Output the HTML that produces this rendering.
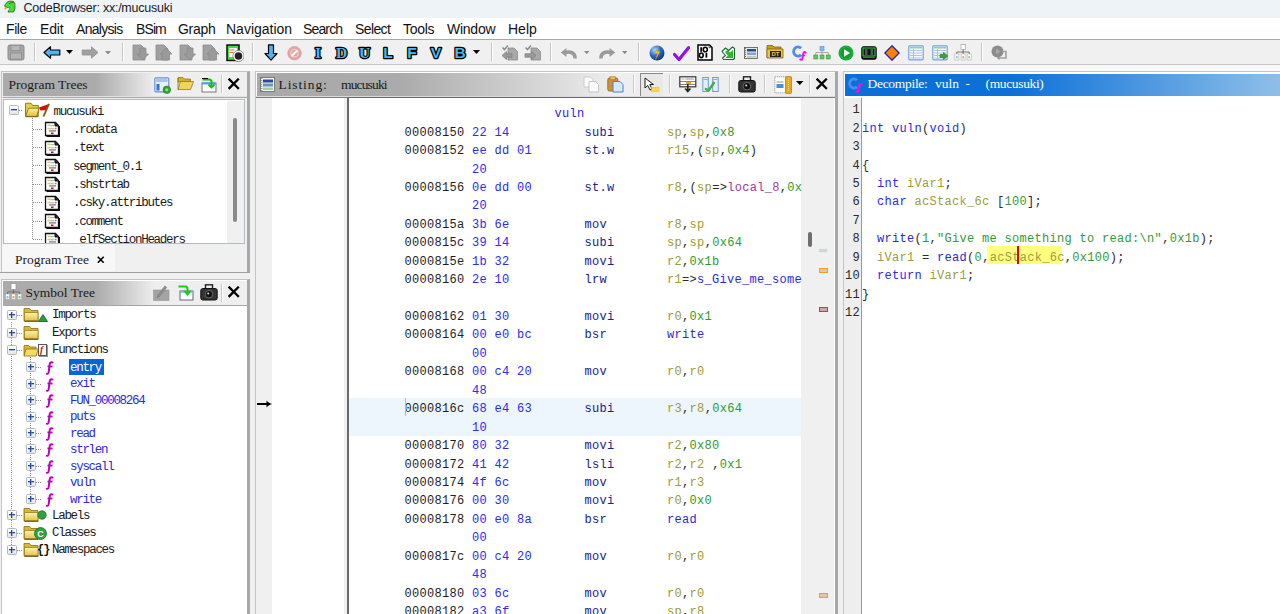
<!DOCTYPE html>
<html><head><meta charset="utf-8">
<style>
*{box-sizing:border-box}
html,body{margin:0;padding:0}
body{width:1280px;height:614px;overflow:hidden;position:relative;background:#f0f0f0;font-family:"Liberation Sans",sans-serif}
.a{position:absolute}
#title{left:0;top:0;width:1280px;height:17.6px;background:#eef3f8}
#title .t{left:23.5px;top:0.8px;font-size:12.5px;color:#1a1a1a;white-space:nowrap;letter-spacing:-0.25px}
#menu{left:0;top:17.6px;width:1280px;height:21.4px;background:#fff}
#menu span{position:absolute;top:3.6px;font-size:14px;color:#111;white-space:nowrap}
#mline{left:0;top:39px;width:1280px;height:1px;background:#a8a8a8}
#tb{left:0;top:40px;width:1280px;height:24px;background:#f0f0f0}
#tbline{left:0;top:64px;width:1280px;height:1px;background:#c8c8c8}
#strip{left:0;top:65px;width:1280px;height:6px;background:#f8f8f8}
.sep{position:absolute;width:1px;background:#c0c0c0}
.mono{font-family:"Liberation Mono",monospace}
.hdr{position:absolute;height:23px}
.htxt{position:absolute;top:5px;font-family:"Liberation Serif",serif;font-size:13.5px;letter-spacing:0px;color:#1a1a1a;white-space:pre}
.row{position:absolute;white-space:pre;font-family:"Liberation Mono",monospace;font-size:12.5px;letter-spacing:-1.3px;color:#111}
.code{position:absolute;white-space:pre;font-family:"Liberation Mono",monospace;font-size:12px;letter-spacing:0.3px;line-height:18.44px}

i{font-style:normal}
.ad{color:#1e1e1e}.by{color:#2a2af2}.mn{color:#20208a}.rg{color:#9c9c32}.cn{color:#2f9a2f}.p{color:#2a2a2a}.lv{color:#a03aa0}.fn{color:#2a2ad0}.lb{color:#2828d8}
.d-p{color:#2a2a2a}.d-k{color:#2a2af0}.d-f{color:#2828d0}.d-v{color:#9c9c40}.d-c{color:#33993a}
.hl{background:#ffff80}
</style></head><body>
<!-- title bar -->
<div id="title" class="a">
  <div class="a t">CodeBrowser: xx:/mucusuki</div>
</div>
<div id="menu" class="a">
  <span style="left:6px;letter-spacing:-0.4px">File</span>
  <span style="left:40px;letter-spacing:-0.2px">Edit</span>
  <span style="left:76px;letter-spacing:-0.7px">Analysis</span>
  <span style="left:136px;letter-spacing:-0.9px">BSim</span>
  <span style="left:178px;letter-spacing:-0.3px">Graph</span>
  <span style="left:226px">Navigation</span>
  <span style="left:303px;letter-spacing:-0.85px">Search</span>
  <span style="left:355px;letter-spacing:-0.6px">Select</span>
  <span style="left:403px;letter-spacing:-0.3px">Tools</span>
  <span style="left:447px;letter-spacing:-0.25px">Window</span>
  <span style="left:508px">Help</span>
</div>
<div id="mline" class="a"></div>
<div id="tb" class="a"></div>
<div id="tbline" class="a"></div>
<div id="strip" class="a"></div>

<!-- LEFT: Program Trees panel -->
<div class="a" style="left:1px;top:71px;width:249px;height:202px;border:1px solid #c4c4c4;border-right:3px solid #a8a8a8;background:#f0f0f0"></div>
<div class="hdr" style="left:3px;top:73px;width:244px;background:linear-gradient(to right,#ababab 0%,#ababab 38%,#eeeeee 62%,#efefef 100%)"></div>
<div class="htxt" style="left:8.5px;top:76.5px">Program Trees</div>
<div class="a" style="left:3px;top:96px;width:244px;height:1px;background:#e4e4e4"></div><div class="a" style="left:3px;top:97px;width:244px;height:1px;background:#a8a8a8"></div>
<div class="a" style="left:3px;top:99px;width:242px;height:145px;border:1px solid #b4bac0;border-top:1.5px solid #b8b8b8;background:#fff"></div><div class="a" style="left:227px;top:100.5px;width:17px;height:142.5px;background:#f0f0f0"></div>
<!-- tab -->
<div class="a" style="left:2px;top:244px;width:113px;height:27px;background:#f7f7f7"></div>
<div class="htxt" style="left:15px;top:251.5px;color:#1a1a1a">Program Tree</div>
<div class="a" style="left:0;top:272px;width:250px;height:1px;background:#a0a0a0"></div>

<!-- LEFT: Symbol Tree panel -->
<div class="a" style="left:1px;top:279px;width:249px;height:336px;border:1px solid #c4c4c4;border-right:3px solid #a8a8a8;border-bottom:none;background:#fff"></div>
<div class="hdr" style="left:3px;top:281px;width:244px;height:24px;background:linear-gradient(to right,#ababab 0%,#ababab 38%,#eeeeee 62%,#efefef 100%)"></div>
<div class="htxt" style="left:25.5px;top:284.5px">Symbol Tree</div>
<div class="a" style="left:3px;top:305px;width:244px;height:1px;background:#a4a4a4"></div>

<!-- MIDDLE: Listing panel -->
<div class="a" style="left:255px;top:71px;width:583px;height:544px;border:1px solid #c4c4c4;border-right:3px solid #a8a8a8;border-bottom:none;background:#fff"></div>
<div class="a" style="left:256px;top:96px;width:579px;height:1px;background:#dcdcdc"></div><div class="a" style="left:256px;top:97px;width:579px;height:1px;background:#7c7c7c"></div>
<div class="hdr" style="left:257px;top:73px;width:578px;height:23px;background:linear-gradient(to right,#a9a9a9 0%,#ababab 25%,#eeeeee 62%,#efefef 100%)"></div>
<div class="htxt" style="left:278.5px;top:76.5px;letter-spacing:0.9px">Listing:</div><div class="htxt" style="left:341px;top:76.5px;letter-spacing:-0.85px">mucusuki</div>
<div class="a" style="left:256px;top:98px;width:16px;height:516px;background:#f0f0f0"></div>
<div class="a" style="left:344px;top:98px;width:3px;height:516px;background:#f0f0f0"></div>
<div class="a" style="left:347px;top:97px;width:2px;height:517px;background:#6a6a6a"></div>
<div class="a" style="left:347px;top:97px;width:454px;height:1px;background:#6a6a6a"></div>
<div class="a" style="left:801px;top:98px;width:33px;height:516px;background:#f0f0f0"></div>

<!-- RIGHT: Decompile panel -->
<div class="a" style="left:843px;top:71px;width:437px;height:544px;border:1px solid #c4c4c4;border-right:none;border-bottom:none;background:#fff"></div>
<div class="hdr" style="left:845px;top:73.5px;width:435px;height:22.7px;background:linear-gradient(to right,#0b6fd8 0%,#0b70d8 38%,#8fbfe8 100%)"></div>
<div class="htxt" style="left:867.5px;top:76px;color:#fff;letter-spacing:-0.3px">Decompile:</div><div class="htxt" style="left:935px;top:76px;color:#fff">vuln</div><div class="htxt" style="left:965.5px;top:76px;color:#fff">-</div><div class="htxt" style="left:985.5px;top:76px;color:#fff;letter-spacing:-0.35px">(mucusuki)</div>
<div class="a" style="left:844px;top:98px;width:17px;height:516px;background:#eeeeee"></div>
<div class="a" style="left:861px;top:98px;width:1px;height:516px;background:#9a9a9a"></div>


<!-- TREES -->
<div class="a" style="left:0;top:0;width:246px;height:243px;overflow:hidden">
<div class="a" style="left:9px;top:105px;width:10px;height:10px;border:1px solid #b0b8c2;border-radius:1.5px;background:linear-gradient(#fff,#e6e6e6)"></div><div class="a" style="left:11px;top:109px;width:6px;height:1px;background:#28458f"></div><div class="a" style="left:11px;top:110px;width:6px;height:1px;background:#6a80b8;opacity:.5"></div>
<div class="a" style="left:19px;top:110px;width:4px;height:1px;background:repeating-linear-gradient(to right,#8a8a8a 0 1px,transparent 1px 2px)"></div>
<svg class="a" style="left:24px;top:102px" width="27" height="16" viewBox="0 0 27 16"><defs><linearGradient id="rf" x1="0" y1="0" x2="0" y2="1"><stop offset="0" stop-color="#fff2a0"/><stop offset="1" stop-color="#e2bc30"/></linearGradient></defs><path d="M1.5 1.2h5.5l1.8 2.3h5.5v10.8H1.5z" fill="#e8cc50" stroke="#8a7010" stroke-width="0.9"/><path d="M4.5 6.2h10.5l-2.2 8.3H1.5z" fill="url(#rf)" stroke="#8a7010" stroke-width="0.9"/><path d="M2 14.8h12" stroke="#5a5030" stroke-width="1" opacity="0.6"/><path d="M15 5.5L24.8 2L22.8 8L16.5 8.5z" fill="#e00808"/><path d="M25 1.8L19.5 14.5" stroke="#7a6010" stroke-width="1.8"/></svg>
<div class="row" style="left:53.5px;top:104.7px;color:#1a1a1a">mucusuki</div>
<div class="a" style="left:32px;top:118px;width:1px;height:122px;background:repeating-linear-gradient(#8a8a8a 0 1px,transparent 1px 2px)"></div>
<div class="a" style="left:33px;top:129px;width:10px;height:1px;background:repeating-linear-gradient(to right,#8a8a8a 0 1px,transparent 1px 2px)"></div>
<svg class="a" style="left:44px;top:121px" width="17" height="16" viewBox="0 0 17 16"><path d="M1.5 1.5h10l3 3v10h-13z" fill="#fff" stroke="#111" stroke-width="1.3"/><path d="M2.5 15.2h12.8V5" fill="none" stroke="#111" stroke-width="1.4"/><path d="M11 1.5v3.5h3.5" fill="#222" stroke="#111"/><rect x="3.5" y="3.5" width="3" height="1.5" fill="#d8d070"/><rect x="6.5" y="4.2" width="4" height="1" fill="#9aa"/><rect x="3.5" y="6.8" width="3" height="1.5" fill="#d8d070"/><rect x="6.5" y="7.3" width="4" height="1" fill="#aaa"/><rect x="11" y="6.8" width="1.5" height="1.5" fill="#d07050"/><rect x="5" y="9.2" width="7" height="1.4" fill="#888"/><rect x="7" y="11.5" width="2.5" height="1.6" fill="#c01010"/></svg>
<div class="row" style="left:73px;top:122.8px;color:#1a1a1a">.rodata</div>
<div class="a" style="left:33px;top:147px;width:10px;height:1px;background:repeating-linear-gradient(to right,#8a8a8a 0 1px,transparent 1px 2px)"></div>
<svg class="a" style="left:44px;top:140px" width="17" height="16" viewBox="0 0 17 16"><path d="M1.5 1.5h10l3 3v10h-13z" fill="#fff" stroke="#111" stroke-width="1.3"/><path d="M2.5 15.2h12.8V5" fill="none" stroke="#111" stroke-width="1.4"/><path d="M11 1.5v3.5h3.5" fill="#222" stroke="#111"/><rect x="3.5" y="3.5" width="3" height="1.5" fill="#d8d070"/><rect x="6.5" y="4.2" width="4" height="1" fill="#9aa"/><rect x="3.5" y="6.8" width="3" height="1.5" fill="#d8d070"/><rect x="6.5" y="7.3" width="4" height="1" fill="#aaa"/><rect x="11" y="6.8" width="1.5" height="1.5" fill="#d07050"/><rect x="5" y="9.2" width="7" height="1.4" fill="#888"/><rect x="7" y="11.5" width="2.5" height="1.6" fill="#c01010"/></svg>
<div class="row" style="left:73px;top:141.2px;color:#1a1a1a">.text</div>
<div class="a" style="left:33px;top:165px;width:10px;height:1px;background:repeating-linear-gradient(to right,#8a8a8a 0 1px,transparent 1px 2px)"></div>
<svg class="a" style="left:44px;top:158px" width="17" height="16" viewBox="0 0 17 16"><path d="M1.5 1.5h10l3 3v10h-13z" fill="#fff" stroke="#111" stroke-width="1.3"/><path d="M2.5 15.2h12.8V5" fill="none" stroke="#111" stroke-width="1.4"/><path d="M11 1.5v3.5h3.5" fill="#222" stroke="#111"/><rect x="3.5" y="3.5" width="3" height="1.5" fill="#d8d070"/><rect x="6.5" y="4.2" width="4" height="1" fill="#9aa"/><rect x="3.5" y="6.8" width="3" height="1.5" fill="#d8d070"/><rect x="6.5" y="7.3" width="4" height="1" fill="#aaa"/><rect x="11" y="6.8" width="1.5" height="1.5" fill="#d07050"/><rect x="5" y="9.2" width="7" height="1.4" fill="#888"/><rect x="7" y="11.5" width="2.5" height="1.6" fill="#c01010"/></svg>
<div class="row" style="left:73px;top:159.59999999999997px;color:#1a1a1a">segment_0.1</div>
<div class="a" style="left:33px;top:184px;width:10px;height:1px;background:repeating-linear-gradient(to right,#8a8a8a 0 1px,transparent 1px 2px)"></div>
<svg class="a" style="left:44px;top:176px" width="17" height="16" viewBox="0 0 17 16"><path d="M1.5 1.5h10l3 3v10h-13z" fill="#fff" stroke="#111" stroke-width="1.3"/><path d="M2.5 15.2h12.8V5" fill="none" stroke="#111" stroke-width="1.4"/><path d="M11 1.5v3.5h3.5" fill="#222" stroke="#111"/><rect x="3.5" y="3.5" width="3" height="1.5" fill="#d8d070"/><rect x="6.5" y="4.2" width="4" height="1" fill="#9aa"/><rect x="3.5" y="6.8" width="3" height="1.5" fill="#d8d070"/><rect x="6.5" y="7.3" width="4" height="1" fill="#aaa"/><rect x="11" y="6.8" width="1.5" height="1.5" fill="#d07050"/><rect x="5" y="9.2" width="7" height="1.4" fill="#888"/><rect x="7" y="11.5" width="2.5" height="1.6" fill="#c01010"/></svg>
<div class="row" style="left:73px;top:177.99999999999997px;color:#1a1a1a">.shstrtab</div>
<div class="a" style="left:33px;top:202px;width:10px;height:1px;background:repeating-linear-gradient(to right,#8a8a8a 0 1px,transparent 1px 2px)"></div>
<svg class="a" style="left:44px;top:195px" width="17" height="16" viewBox="0 0 17 16"><path d="M1.5 1.5h10l3 3v10h-13z" fill="#fff" stroke="#111" stroke-width="1.3"/><path d="M2.5 15.2h12.8V5" fill="none" stroke="#111" stroke-width="1.4"/><path d="M11 1.5v3.5h3.5" fill="#222" stroke="#111"/><rect x="3.5" y="3.5" width="3" height="1.5" fill="#d8d070"/><rect x="6.5" y="4.2" width="4" height="1" fill="#9aa"/><rect x="3.5" y="6.8" width="3" height="1.5" fill="#d8d070"/><rect x="6.5" y="7.3" width="4" height="1" fill="#aaa"/><rect x="11" y="6.8" width="1.5" height="1.5" fill="#d07050"/><rect x="5" y="9.2" width="7" height="1.4" fill="#888"/><rect x="7" y="11.5" width="2.5" height="1.6" fill="#c01010"/></svg>
<div class="row" style="left:73px;top:196.39999999999998px;color:#1a1a1a">.csky.attributes</div>
<div class="a" style="left:33px;top:221px;width:10px;height:1px;background:repeating-linear-gradient(to right,#8a8a8a 0 1px,transparent 1px 2px)"></div>
<svg class="a" style="left:44px;top:213px" width="17" height="16" viewBox="0 0 17 16"><path d="M1.5 1.5h10l3 3v10h-13z" fill="#fff" stroke="#111" stroke-width="1.3"/><path d="M2.5 15.2h12.8V5" fill="none" stroke="#111" stroke-width="1.4"/><path d="M11 1.5v3.5h3.5" fill="#222" stroke="#111"/><rect x="3.5" y="3.5" width="3" height="1.5" fill="#d8d070"/><rect x="6.5" y="4.2" width="4" height="1" fill="#9aa"/><rect x="3.5" y="6.8" width="3" height="1.5" fill="#d8d070"/><rect x="6.5" y="7.3" width="4" height="1" fill="#aaa"/><rect x="11" y="6.8" width="1.5" height="1.5" fill="#d07050"/><rect x="5" y="9.2" width="7" height="1.4" fill="#888"/><rect x="7" y="11.5" width="2.5" height="1.6" fill="#c01010"/></svg>
<div class="row" style="left:73px;top:214.79999999999998px;color:#1a1a1a">.comment</div>
<div class="a" style="left:33px;top:239px;width:10px;height:1px;background:repeating-linear-gradient(to right,#8a8a8a 0 1px,transparent 1px 2px)"></div>
<svg class="a" style="left:44px;top:232px" width="17" height="16" viewBox="0 0 17 16"><path d="M1.5 1.5h10l3 3v10h-13z" fill="#fff" stroke="#111" stroke-width="1.3"/><path d="M2.5 15.2h12.8V5" fill="none" stroke="#111" stroke-width="1.4"/><path d="M11 1.5v3.5h3.5" fill="#222" stroke="#111"/><rect x="3.5" y="3.5" width="3" height="1.5" fill="#d8d070"/><rect x="6.5" y="4.2" width="4" height="1" fill="#9aa"/><rect x="3.5" y="6.8" width="3" height="1.5" fill="#d8d070"/><rect x="6.5" y="7.3" width="4" height="1" fill="#aaa"/><rect x="11" y="6.8" width="1.5" height="1.5" fill="#d07050"/><rect x="5" y="9.2" width="7" height="1.4" fill="#888"/><rect x="7" y="11.5" width="2.5" height="1.6" fill="#c01010"/></svg>
<div class="row" style="left:73px;top:233.2px;color:#1a1a1a">_elfSectionHeaders</div>
<div class="a" style="left:233px;top:118px;width:4px;height:104px;background:#8a8a8a;border-radius:2px"></div>
</div>
<div class="a" style="left:11px;top:322px;width:1px;height:232px;background:repeating-linear-gradient(#8a8a8a 0 1px,transparent 1px 2px)"></div>
<div class="a" style="left:7px;top:310px;width:10px;height:10px;border:1px solid #b0b8c2;border-radius:1.5px;background:linear-gradient(#fff,#e6e6e6)"></div><div class="a" style="left:9px;top:314px;width:6px;height:1px;background:#28458f"></div><div class="a" style="left:9px;top:315px;width:6px;height:1px;background:#6a80b8;opacity:.5"></div><div class="a" style="left:11px;top:312px;width:1px;height:6px;background:#28458f"></div><div class="a" style="left:12px;top:312px;width:1px;height:6px;background:#6a80b8;opacity:.5"></div>
<div class="a" style="left:17px;top:315px;width:5px;height:1px;background:repeating-linear-gradient(to right,#8a8a8a 0 1px,transparent 1px 2px)"></div>
<svg class="a" style="left:23px;top:307px" width="17" height="15" viewBox="0 0 17 15"><defs><linearGradient id="fg" x1="0" y1="0" x2="0" y2="1"><stop offset="0" stop-color="#fff4b0"/><stop offset="1" stop-color="#e0c048"/></linearGradient></defs><path d="M1 1.5h5.5l1.5 2h7v10.5H1z" fill="#d8b838" stroke="#8a7010" stroke-width="0.8"/><path d="M1.5 5.5h13.5v8.5H1.5z" fill="url(#fg)" stroke="#9a8018" stroke-width="0.8"/><path d="M1.5 14.2h13.8" stroke="#6a5a10" stroke-width="1.2"/></svg>
<div class="row" style="left:52px;top:308.09999999999997px;color:#1a1a1a">Imports</div>
<div class="a" style="left:7px;top:328px;width:10px;height:10px;border:1px solid #b0b8c2;border-radius:1.5px;background:linear-gradient(#fff,#e6e6e6)"></div><div class="a" style="left:9px;top:332px;width:6px;height:1px;background:#28458f"></div><div class="a" style="left:9px;top:333px;width:6px;height:1px;background:#6a80b8;opacity:.5"></div><div class="a" style="left:11px;top:330px;width:1px;height:6px;background:#28458f"></div><div class="a" style="left:12px;top:330px;width:1px;height:6px;background:#6a80b8;opacity:.5"></div>
<div class="a" style="left:17px;top:333px;width:5px;height:1px;background:repeating-linear-gradient(to right,#8a8a8a 0 1px,transparent 1px 2px)"></div>
<svg class="a" style="left:23px;top:325px" width="17" height="15" viewBox="0 0 17 15"><defs><linearGradient id="fg" x1="0" y1="0" x2="0" y2="1"><stop offset="0" stop-color="#fff4b0"/><stop offset="1" stop-color="#e0c048"/></linearGradient></defs><path d="M1 1.5h5.5l1.5 2h7v10.5H1z" fill="#d8b838" stroke="#8a7010" stroke-width="0.8"/><path d="M1.5 5.5h13.5v8.5H1.5z" fill="url(#fg)" stroke="#9a8018" stroke-width="0.8"/><path d="M1.5 14.2h13.8" stroke="#6a5a10" stroke-width="1.2"/></svg>
<div class="row" style="left:52px;top:325.7px;color:#1a1a1a">Exports</div>
<div class="a" style="left:7px;top:345px;width:10px;height:10px;border:1px solid #b0b8c2;border-radius:1.5px;background:linear-gradient(#fff,#e6e6e6)"></div><div class="a" style="left:9px;top:349px;width:6px;height:1px;background:#28458f"></div><div class="a" style="left:9px;top:350px;width:6px;height:1px;background:#6a80b8;opacity:.5"></div>
<div class="a" style="left:17px;top:350px;width:5px;height:1px;background:repeating-linear-gradient(to right,#8a8a8a 0 1px,transparent 1px 2px)"></div>
<svg class="a" style="left:23px;top:343px" width="16" height="14" viewBox="0 0 16 14"><path d="M1 2.5h4.5l1.5 1.5h6v8.5H1z" fill="#d9b838" stroke="#8a7010" stroke-width="0.8"/><path d="M3 6h12.5l-2.5 7H1z" fill="#f4dc60" stroke="#8a7010" stroke-width="0.8"/></svg>
<div class="row" style="left:52px;top:343.0px;color:#1a1a1a">Functions</div>
<div class="a" style="left:7px;top:510px;width:10px;height:10px;border:1px solid #b0b8c2;border-radius:1.5px;background:linear-gradient(#fff,#e6e6e6)"></div><div class="a" style="left:9px;top:514px;width:6px;height:1px;background:#28458f"></div><div class="a" style="left:9px;top:515px;width:6px;height:1px;background:#6a80b8;opacity:.5"></div><div class="a" style="left:11px;top:512px;width:1px;height:6px;background:#28458f"></div><div class="a" style="left:12px;top:512px;width:1px;height:6px;background:#6a80b8;opacity:.5"></div>
<div class="a" style="left:17px;top:515px;width:5px;height:1px;background:repeating-linear-gradient(to right,#8a8a8a 0 1px,transparent 1px 2px)"></div>
<svg class="a" style="left:23px;top:507px" width="17" height="15" viewBox="0 0 17 15"><defs><linearGradient id="fg" x1="0" y1="0" x2="0" y2="1"><stop offset="0" stop-color="#fff4b0"/><stop offset="1" stop-color="#e0c048"/></linearGradient></defs><path d="M1 1.5h5.5l1.5 2h7v10.5H1z" fill="#d8b838" stroke="#8a7010" stroke-width="0.8"/><path d="M1.5 5.5h13.5v8.5H1.5z" fill="url(#fg)" stroke="#9a8018" stroke-width="0.8"/><path d="M1.5 14.2h13.8" stroke="#6a5a10" stroke-width="1.2"/></svg>
<div class="row" style="left:52px;top:508.59999999999997px;color:#1a1a1a">Labels</div>
<div class="a" style="left:7px;top:528px;width:10px;height:10px;border:1px solid #b0b8c2;border-radius:1.5px;background:linear-gradient(#fff,#e6e6e6)"></div><div class="a" style="left:9px;top:532px;width:6px;height:1px;background:#28458f"></div><div class="a" style="left:9px;top:533px;width:6px;height:1px;background:#6a80b8;opacity:.5"></div><div class="a" style="left:11px;top:530px;width:1px;height:6px;background:#28458f"></div><div class="a" style="left:12px;top:530px;width:1px;height:6px;background:#6a80b8;opacity:.5"></div>
<div class="a" style="left:17px;top:533px;width:5px;height:1px;background:repeating-linear-gradient(to right,#8a8a8a 0 1px,transparent 1px 2px)"></div>
<svg class="a" style="left:23px;top:525px" width="17" height="15" viewBox="0 0 17 15"><defs><linearGradient id="fg" x1="0" y1="0" x2="0" y2="1"><stop offset="0" stop-color="#fff4b0"/><stop offset="1" stop-color="#e0c048"/></linearGradient></defs><path d="M1 1.5h5.5l1.5 2h7v10.5H1z" fill="#d8b838" stroke="#8a7010" stroke-width="0.8"/><path d="M1.5 5.5h13.5v8.5H1.5z" fill="url(#fg)" stroke="#9a8018" stroke-width="0.8"/><path d="M1.5 14.2h13.8" stroke="#6a5a10" stroke-width="1.2"/></svg>
<div class="row" style="left:52px;top:526.0px;color:#1a1a1a">Classes</div>
<div class="a" style="left:7px;top:545px;width:10px;height:10px;border:1px solid #b0b8c2;border-radius:1.5px;background:linear-gradient(#fff,#e6e6e6)"></div><div class="a" style="left:9px;top:549px;width:6px;height:1px;background:#28458f"></div><div class="a" style="left:9px;top:550px;width:6px;height:1px;background:#6a80b8;opacity:.5"></div><div class="a" style="left:11px;top:547px;width:1px;height:6px;background:#28458f"></div><div class="a" style="left:12px;top:547px;width:1px;height:6px;background:#6a80b8;opacity:.5"></div>
<div class="a" style="left:17px;top:550px;width:5px;height:1px;background:repeating-linear-gradient(to right,#8a8a8a 0 1px,transparent 1px 2px)"></div>
<svg class="a" style="left:23px;top:542px" width="17" height="15" viewBox="0 0 17 15"><defs><linearGradient id="fg" x1="0" y1="0" x2="0" y2="1"><stop offset="0" stop-color="#fff4b0"/><stop offset="1" stop-color="#e0c048"/></linearGradient></defs><path d="M1 1.5h5.5l1.5 2h7v10.5H1z" fill="#d8b838" stroke="#8a7010" stroke-width="0.8"/><path d="M1.5 5.5h13.5v8.5H1.5z" fill="url(#fg)" stroke="#9a8018" stroke-width="0.8"/><path d="M1.5 14.2h13.8" stroke="#6a5a10" stroke-width="1.2"/></svg>
<div class="row" style="left:52px;top:543.4000000000001px;color:#1a1a1a">Namespaces</div>
<svg class="a" style="left:38px;top:314px" width="10" height="8" viewBox="0 0 10 8"><path d="M5 0.5L9.5 7.5H0.5z" fill="#22a040" stroke="#106020" stroke-width="0.8"/></svg>
<div class="a" style="left:38px;top:344px;width:9px;height:12px;background:#fff;border:1px solid #555;box-shadow:1px 1px 0 #999"></div><div class="a" style="left:40px;top:344px;font:italic bold 10px 'Liberation Serif';color:#e01010">f</div>
<svg class="a" style="left:37px;top:510px" width="10" height="10" viewBox="0 0 10 10"><circle cx="5" cy="5" r="4.2" fill="#30a040" stroke="#207030" stroke-width="0.8"/></svg>
<svg class="a" style="left:34px;top:527px" width="13" height="13" viewBox="0 0 13 13"><circle cx="6.5" cy="6.5" r="6" fill="#30a040" stroke="#207030" stroke-width="0.8"/><text x="6.5" y="10" font-family="Liberation Sans" font-size="9" font-weight="bold" fill="#fff" text-anchor="middle">C</text></svg>
<div class="a" style="left:37px;top:543px;font:bold 12px 'Liberation Mono';color:#111;letter-spacing:-1px">{}</div>
<div class="a" style="left:30px;top:357px;width:1px;height:146px;background:repeating-linear-gradient(#8a8a8a 0 1px,transparent 1px 2px)"></div>
<div class="a" style="left:26px;top:362px;width:10px;height:10px;border:1px solid #b0b8c2;border-radius:1.5px;background:linear-gradient(#fff,#e6e6e6)"></div><div class="a" style="left:28px;top:366px;width:6px;height:1px;background:#28458f"></div><div class="a" style="left:28px;top:367px;width:6px;height:1px;background:#6a80b8;opacity:.5"></div><div class="a" style="left:30px;top:364px;width:1px;height:6px;background:#28458f"></div><div class="a" style="left:31px;top:364px;width:1px;height:6px;background:#6a80b8;opacity:.5"></div>
<div class="a" style="left:36px;top:367px;width:5px;height:1px;background:repeating-linear-gradient(to right,#8a8a8a 0 1px,transparent 1px 2px)"></div>
<svg class="a" style="left:46px;top:361px" width="8" height="14" viewBox="0 0 8 14"><path d="M6.8 2.2C6 0.8 4.2 1 3.8 2.8L2.6 11.5C2.2 13 0.8 13 0.6 12" fill="none" stroke="#c000c0" stroke-width="2"/><path d="M1.5 5.5h5" stroke="#c000c0" stroke-width="1.8"/></svg>
<div class="a" style="left:69px;top:358.5px;width:35px;height:16px;background:#0a64d4"></div>
<div class="row" style="left:70px;top:360.9px;color:#fff">entry</div>
<div class="a" style="left:26px;top:379px;width:10px;height:10px;border:1px solid #b0b8c2;border-radius:1.5px;background:linear-gradient(#fff,#e6e6e6)"></div><div class="a" style="left:28px;top:383px;width:6px;height:1px;background:#28458f"></div><div class="a" style="left:28px;top:384px;width:6px;height:1px;background:#6a80b8;opacity:.5"></div><div class="a" style="left:30px;top:381px;width:1px;height:6px;background:#28458f"></div><div class="a" style="left:31px;top:381px;width:1px;height:6px;background:#6a80b8;opacity:.5"></div>
<div class="a" style="left:36px;top:384px;width:5px;height:1px;background:repeating-linear-gradient(to right,#8a8a8a 0 1px,transparent 1px 2px)"></div>
<svg class="a" style="left:46px;top:378px" width="8" height="14" viewBox="0 0 8 14"><path d="M6.8 2.2C6 0.8 4.2 1 3.8 2.8L2.6 11.5C2.2 13 0.8 13 0.6 12" fill="none" stroke="#c000c0" stroke-width="2"/><path d="M1.5 5.5h5" stroke="#c000c0" stroke-width="1.8"/></svg>
<div class="row" style="left:70px;top:377.35999999999996px;color:#2a2ae0">exit</div>
<div class="a" style="left:26px;top:395px;width:10px;height:10px;border:1px solid #b0b8c2;border-radius:1.5px;background:linear-gradient(#fff,#e6e6e6)"></div><div class="a" style="left:28px;top:399px;width:6px;height:1px;background:#28458f"></div><div class="a" style="left:28px;top:400px;width:6px;height:1px;background:#6a80b8;opacity:.5"></div><div class="a" style="left:30px;top:397px;width:1px;height:6px;background:#28458f"></div><div class="a" style="left:31px;top:397px;width:1px;height:6px;background:#6a80b8;opacity:.5"></div>
<div class="a" style="left:36px;top:400px;width:5px;height:1px;background:repeating-linear-gradient(to right,#8a8a8a 0 1px,transparent 1px 2px)"></div>
<svg class="a" style="left:46px;top:394px" width="8" height="14" viewBox="0 0 8 14"><path d="M6.8 2.2C6 0.8 4.2 1 3.8 2.8L2.6 11.5C2.2 13 0.8 13 0.6 12" fill="none" stroke="#c000c0" stroke-width="2"/><path d="M1.5 5.5h5" stroke="#c000c0" stroke-width="1.8"/></svg>
<div class="row" style="left:70px;top:393.82px;color:#2a2ae0">FUN_00008264</div>
<div class="a" style="left:26px;top:412px;width:10px;height:10px;border:1px solid #b0b8c2;border-radius:1.5px;background:linear-gradient(#fff,#e6e6e6)"></div><div class="a" style="left:28px;top:416px;width:6px;height:1px;background:#28458f"></div><div class="a" style="left:28px;top:417px;width:6px;height:1px;background:#6a80b8;opacity:.5"></div><div class="a" style="left:30px;top:414px;width:1px;height:6px;background:#28458f"></div><div class="a" style="left:31px;top:414px;width:1px;height:6px;background:#6a80b8;opacity:.5"></div>
<div class="a" style="left:36px;top:417px;width:5px;height:1px;background:repeating-linear-gradient(to right,#8a8a8a 0 1px,transparent 1px 2px)"></div>
<svg class="a" style="left:46px;top:411px" width="8" height="14" viewBox="0 0 8 14"><path d="M6.8 2.2C6 0.8 4.2 1 3.8 2.8L2.6 11.5C2.2 13 0.8 13 0.6 12" fill="none" stroke="#c000c0" stroke-width="2"/><path d="M1.5 5.5h5" stroke="#c000c0" stroke-width="1.8"/></svg>
<div class="row" style="left:70px;top:410.28px;color:#2a2ae0">puts</div>
<div class="a" style="left:26px;top:428px;width:10px;height:10px;border:1px solid #b0b8c2;border-radius:1.5px;background:linear-gradient(#fff,#e6e6e6)"></div><div class="a" style="left:28px;top:432px;width:6px;height:1px;background:#28458f"></div><div class="a" style="left:28px;top:433px;width:6px;height:1px;background:#6a80b8;opacity:.5"></div><div class="a" style="left:30px;top:430px;width:1px;height:6px;background:#28458f"></div><div class="a" style="left:31px;top:430px;width:1px;height:6px;background:#6a80b8;opacity:.5"></div>
<div class="a" style="left:36px;top:433px;width:5px;height:1px;background:repeating-linear-gradient(to right,#8a8a8a 0 1px,transparent 1px 2px)"></div>
<svg class="a" style="left:46px;top:427px" width="8" height="14" viewBox="0 0 8 14"><path d="M6.8 2.2C6 0.8 4.2 1 3.8 2.8L2.6 11.5C2.2 13 0.8 13 0.6 12" fill="none" stroke="#c000c0" stroke-width="2"/><path d="M1.5 5.5h5" stroke="#c000c0" stroke-width="1.8"/></svg>
<div class="row" style="left:70px;top:426.73999999999995px;color:#2a2ae0">read</div>
<div class="a" style="left:26px;top:444px;width:10px;height:10px;border:1px solid #b0b8c2;border-radius:1.5px;background:linear-gradient(#fff,#e6e6e6)"></div><div class="a" style="left:28px;top:448px;width:6px;height:1px;background:#28458f"></div><div class="a" style="left:28px;top:449px;width:6px;height:1px;background:#6a80b8;opacity:.5"></div><div class="a" style="left:30px;top:446px;width:1px;height:6px;background:#28458f"></div><div class="a" style="left:31px;top:446px;width:1px;height:6px;background:#6a80b8;opacity:.5"></div>
<div class="a" style="left:36px;top:449px;width:5px;height:1px;background:repeating-linear-gradient(to right,#8a8a8a 0 1px,transparent 1px 2px)"></div>
<svg class="a" style="left:46px;top:443px" width="8" height="14" viewBox="0 0 8 14"><path d="M6.8 2.2C6 0.8 4.2 1 3.8 2.8L2.6 11.5C2.2 13 0.8 13 0.6 12" fill="none" stroke="#c000c0" stroke-width="2"/><path d="M1.5 5.5h5" stroke="#c000c0" stroke-width="1.8"/></svg>
<div class="row" style="left:70px;top:443.2px;color:#2a2ae0">strlen</div>
<div class="a" style="left:26px;top:461px;width:10px;height:10px;border:1px solid #b0b8c2;border-radius:1.5px;background:linear-gradient(#fff,#e6e6e6)"></div><div class="a" style="left:28px;top:465px;width:6px;height:1px;background:#28458f"></div><div class="a" style="left:28px;top:466px;width:6px;height:1px;background:#6a80b8;opacity:.5"></div><div class="a" style="left:30px;top:463px;width:1px;height:6px;background:#28458f"></div><div class="a" style="left:31px;top:463px;width:1px;height:6px;background:#6a80b8;opacity:.5"></div>
<div class="a" style="left:36px;top:466px;width:5px;height:1px;background:repeating-linear-gradient(to right,#8a8a8a 0 1px,transparent 1px 2px)"></div>
<svg class="a" style="left:46px;top:460px" width="8" height="14" viewBox="0 0 8 14"><path d="M6.8 2.2C6 0.8 4.2 1 3.8 2.8L2.6 11.5C2.2 13 0.8 13 0.6 12" fill="none" stroke="#c000c0" stroke-width="2"/><path d="M1.5 5.5h5" stroke="#c000c0" stroke-width="1.8"/></svg>
<div class="row" style="left:70px;top:459.65999999999997px;color:#2a2ae0">syscall</div>
<div class="a" style="left:26px;top:477px;width:10px;height:10px;border:1px solid #b0b8c2;border-radius:1.5px;background:linear-gradient(#fff,#e6e6e6)"></div><div class="a" style="left:28px;top:481px;width:6px;height:1px;background:#28458f"></div><div class="a" style="left:28px;top:482px;width:6px;height:1px;background:#6a80b8;opacity:.5"></div><div class="a" style="left:30px;top:479px;width:1px;height:6px;background:#28458f"></div><div class="a" style="left:31px;top:479px;width:1px;height:6px;background:#6a80b8;opacity:.5"></div>
<div class="a" style="left:36px;top:482px;width:5px;height:1px;background:repeating-linear-gradient(to right,#8a8a8a 0 1px,transparent 1px 2px)"></div>
<svg class="a" style="left:46px;top:476px" width="8" height="14" viewBox="0 0 8 14"><path d="M6.8 2.2C6 0.8 4.2 1 3.8 2.8L2.6 11.5C2.2 13 0.8 13 0.6 12" fill="none" stroke="#c000c0" stroke-width="2"/><path d="M1.5 5.5h5" stroke="#c000c0" stroke-width="1.8"/></svg>
<div class="row" style="left:70px;top:476.11999999999995px;color:#2a2ae0">vuln</div>
<div class="a" style="left:26px;top:494px;width:10px;height:10px;border:1px solid #b0b8c2;border-radius:1.5px;background:linear-gradient(#fff,#e6e6e6)"></div><div class="a" style="left:28px;top:498px;width:6px;height:1px;background:#28458f"></div><div class="a" style="left:28px;top:499px;width:6px;height:1px;background:#6a80b8;opacity:.5"></div><div class="a" style="left:30px;top:496px;width:1px;height:6px;background:#28458f"></div><div class="a" style="left:31px;top:496px;width:1px;height:6px;background:#6a80b8;opacity:.5"></div>
<div class="a" style="left:36px;top:499px;width:5px;height:1px;background:repeating-linear-gradient(to right,#8a8a8a 0 1px,transparent 1px 2px)"></div>
<svg class="a" style="left:46px;top:493px" width="8" height="14" viewBox="0 0 8 14"><path d="M6.8 2.2C6 0.8 4.2 1 3.8 2.8L2.6 11.5C2.2 13 0.8 13 0.6 12" fill="none" stroke="#c000c0" stroke-width="2"/><path d="M1.5 5.5h5" stroke="#c000c0" stroke-width="1.8"/></svg>
<div class="row" style="left:70px;top:492.58px;color:#2a2ae0">write</div>
<svg class="a" style="left:97px;top:255.5px" width="7.5" height="7.5" viewBox="0 0 7.5 7.5"><path d="M0.8 0.8L6.7 6.7M6.7 0.8L0.8 6.7" stroke="#000" stroke-width="1.6"/></svg>
<svg class="a" style="left:256px;top:399.5px" width="17" height="8" viewBox="0 0 17 8"><path d="M1 4H12" stroke="#000" stroke-width="2"/><path d="M10.5 0.5C12 2.5 14 3.5 16.2 4C14 4.5 12 5.5 10.5 7.5z" fill="#000"/></svg>
<div class="a" style="left:807.5px;top:231.5px;width:4px;height:15.5px;background:#6e6e6e;border-radius:2px"></div>
<div class="a" style="left:818.5px;top:248.5px;width:8.5px;height:3.5px;background:#d4d4d4;box-shadow:0 0 0 1px #e8eef4"></div>
<div class="a" style="left:818.5px;top:267.5px;width:9px;height:5px;background:#e0c8a0;border:1px solid #f0a020"></div>
<div class="a" style="left:818.5px;top:307px;width:9px;height:5px;background:#d8a0a8;border:1px solid #d83050"></div>
<div class="a" style="left:818.5px;top:593px;width:9px;height:5px;background:#e0c8a0;border:1px solid #f0a020"></div>
<!-- /TREES -->
<!-- listing content -->
<div class="a" style="left:349px;top:397.5px;width:452px;height:38px;background:#edf5fd"></div>
<div class="code" style="left:404.5px;top:105.2px">                    <i class="lb">vuln</i>
<i class="ad">00008150</i> <i class="by">22 14          </i><i class="mn">subi       </i><i class="rg">sp</i><i class="p">,</i><i class="rg">sp</i><i class="p">,</i><i class="cn">0x8</i>
<i class="ad">00008152</i> <i class="by">ee dd 01       </i><i class="mn">st.w       </i><i class="rg">r15</i><i class="p">,(</i><i class="rg">sp</i><i class="p">,</i><i class="cn">0x4</i><i class="p">)</i>
         <i class="by">20</i>
<i class="ad">00008156</i> <i class="by">0e dd 00       </i><i class="mn">st.w       </i><i class="rg">r8</i><i class="p">,(</i><i class="rg">sp</i><i class="p">=></i><i class="lv">local_8</i><i class="p">,</i><i class="cn">0x</i>
         <i class="by">20</i>
<i class="ad">0000815a</i> <i class="by">3b 6e          </i><i class="mn">mov        </i><i class="rg">r8</i><i class="p">,</i><i class="rg">sp</i>
<i class="ad">0000815c</i> <i class="by">39 14          </i><i class="mn">subi       </i><i class="rg">sp</i><i class="p">,</i><i class="rg">sp</i><i class="p">,</i><i class="cn">0x64</i>
<i class="ad">0000815e</i> <i class="by">1b 32          </i><i class="mn">movi       </i><i class="rg">r2</i><i class="p">,</i><i class="cn">0x1b</i>
<i class="ad">00008160</i> <i class="by">2e 10          </i><i class="mn">lrw        </i><i class="rg">r1</i><i class="p">=></i><i class="fn">s_Give_me_some</i>

<i class="ad">00008162</i> <i class="by">01 30          </i><i class="mn">movi       </i><i class="rg">r0</i><i class="p">,</i><i class="cn">0x1</i>
<i class="ad">00008164</i> <i class="by">00 e0 bc       </i><i class="mn">bsr        </i><i class="fn">write</i>
         <i class="by">00</i>
<i class="ad">00008168</i> <i class="by">00 c4 20       </i><i class="mn">mov        </i><i class="rg">r0</i><i class="p">,</i><i class="rg">r0</i>
         <i class="by">48</i>
<i class="ad">0000816c</i> <i class="by">68 e4 63       </i><i class="mn">subi       </i><i class="rg">r3</i><i class="p">,</i><i class="rg">r8</i><i class="p">,</i><i class="cn">0x64</i>
         <i class="by">10</i>
<i class="ad">00008170</i> <i class="by">80 32          </i><i class="mn">movi       </i><i class="rg">r2</i><i class="p">,</i><i class="cn">0x80</i>
<i class="ad">00008172</i> <i class="by">41 42          </i><i class="mn">lsli       </i><i class="rg">r2</i><i class="p">,</i><i class="rg">r2</i><i class="p"> ,</i><i class="cn">0x1</i>
<i class="ad">00008174</i> <i class="by">4f 6c          </i><i class="mn">mov        </i><i class="rg">r1</i><i class="p">,</i><i class="rg">r3</i>
<i class="ad">00008176</i> <i class="by">00 30          </i><i class="mn">movi       </i><i class="rg">r0</i><i class="p">,</i><i class="cn">0x0</i>
<i class="ad">00008178</i> <i class="by">00 e0 8a       </i><i class="mn">bsr        </i><i class="fn">read</i>
         <i class="by">00</i>
<i class="ad">0000817c</i> <i class="by">00 c4 20       </i><i class="mn">mov        </i><i class="rg">r0</i><i class="p">,</i><i class="rg">r0</i>
         <i class="by">48</i>
<i class="ad">00008180</i> <i class="by">03 6c          </i><i class="mn">mov        </i><i class="rg">r0</i><i class="p">,</i><i class="rg">r0</i>
<i class="ad">00008182</i> <i class="by">a3 6f          </i><i class="mn">mov        </i><i class="rg">sp</i><i class="p">,</i><i class="rg">r8</i></div>
<div class="a" style="left:404.5px;top:398px;width:1.8px;height:17.5px;background:#f2a0a8"></div>
<!-- decompile content -->
<div class="code" style="left:845px;top:101.2px;width:15px;text-align:right;color:#2a2a2a">1
2
3
4
5
6
7
8
9
10
11
12</div>
<div class="a" style="left:987px;top:246px;width:75px;height:18px;background:#ffff80"></div>
<div class="code" style="left:862px;top:101.2px"><i class="d-p"></i>
<i class="d-k">int</i> <i class="d-f">vuln</i><i class="d-p">(</i><i class="d-k">void</i><i class="d-p">)</i>

<i class="d-p">{</i>
  <i class="d-k">int</i> <i class="d-v">iVar1</i><i class="d-p">;</i>
  <i class="d-k">char</i> <i class="d-v">acStack_6c</i> <i class="d-p">[</i><i class="d-c">100</i><i class="d-p">];</i>

  <i class="d-f">write</i><i class="d-p">(</i><i class="d-c">1</i><i class="d-p">,</i><i class="d-c">"Give me something to read:\n"</i><i class="d-p">,</i><i class="d-c">0x1b</i><i class="d-p">);</i>
  <i class="d-v">iVar1</i> <i class="d-p">=</i> <i class="d-f">read</i><i class="d-p">(</i><i class="d-c">0</i><i class="d-p">,</i><i class="d-v">acStack_6c</i><i class="d-p">,</i><i class="d-c">0x100</i><i class="d-p">);</i>
  <i class="d-k">return</i> <i class="d-v">iVar1</i><i class="d-p">;</i>
<i class="d-p">}</i>
</div>
<div class="a" style="left:1017px;top:246px;width:2px;height:18px;background:#e00000"></div>
<!-- ICONS -->
<svg class="a" style="left:7px;top:44px" width="18" height="17" viewBox="0 0 18 17"><rect x="1" y="1" width="16" height="15" rx="2" fill="#a4a4a4" stroke="#8c8c8c"/><rect x="4" y="1.5" width="9" height="5" fill="#b8b8b8" stroke="#909090" stroke-width="0.8"/><rect x="3.5" y="9" width="11" height="6" fill="#b4b4b4" stroke="#909090" stroke-width="0.8"/></svg>
<div class="a" style="left:33.5px;top:43px;width:1px;height:18px;background:#c4c4c4;box-shadow:1px 0 0 #fff"></div>
<svg class="a" style="left:43px;top:46px" width="18" height="13" viewBox="0 0 18 13"><path d="M1 6.5L7.5 0.8V4H16.8V9H7.5V12.2z" fill="#4cb4f0" stroke="#000" stroke-width="1.2" stroke-linejoin="round"/></svg>
<svg class="a" style="left:65.5px;top:49.5px" width="7" height="4" viewBox="0 0 7 4"><path d="M0 0H7L3.5 4z" fill="#000"/></svg>
<svg class="a" style="left:81px;top:46px" width="18" height="13" viewBox="0 0 18 13"><path d="M17 6.5L10.5 0.8V4H1.2V9H10.5V12.2z" fill="#a0a0a0" stroke="#909090" stroke-width="0.8"/></svg>
<svg class="a" style="left:105px;top:50.5px" width="6" height="3.5" viewBox="0 0 6 3.5"><path d="M0 0H6L3 3.5z" fill="#8c8c8c"/></svg>
<div class="a" style="left:121.5px;top:43px;width:1px;height:18px;background:#c4c4c4;box-shadow:1px 0 0 #fff"></div>
<svg class="a" style="left:131.5px;top:44px" width="18" height="17" viewBox="0 0 18 17"><path d="M1 1h8l4 4v11H1z" fill="#a0a0a0" stroke="#8a8a8a" stroke-width="0.8"/><path d="M8 4h6v6h2.5L11 16 5 10h3z" fill="#9a9a9a" stroke="#8a8a8a" stroke-width="0.8"/></svg>
<svg class="a" style="left:155px;top:44px" width="18" height="17" viewBox="0 0 18 17"><path d="M1 1h8l4 4v11H1z" fill="#a0a0a0" stroke="#8a8a8a" stroke-width="0.8"/><path d="M7 16V10H5L11 4l6 6h-2.5v6z" fill="#9a9a9a" stroke="#8a8a8a" stroke-width="0.8"/></svg>
<svg class="a" style="left:178.5px;top:44px" width="18" height="17" viewBox="0 0 18 17"><path d="M1 1h8l4 4v11H1z" fill="#a0a0a0" stroke="#8a8a8a" stroke-width="0.8"/><path d="M8 4h6v6h2.5L11 16 5 10h3z" fill="#9a9a9a" stroke="#8a8a8a" stroke-width="0.8"/></svg>
<svg class="a" style="left:202px;top:44px" width="18" height="17" viewBox="0 0 18 17"><path d="M1 1h8l4 4v11H1z" fill="#a0a0a0" stroke="#8a8a8a" stroke-width="0.8"/><path d="M7 16V10H5L11 4l6 6h-2.5v6z" fill="#9a9a9a" stroke="#8a8a8a" stroke-width="0.8"/></svg>
<svg class="a" style="left:225.5px;top:44px" width="18" height="18" viewBox="0 0 18 18"><rect x="1" y="1" width="12" height="15.5" fill="#40e040" stroke="#000" stroke-width="1.4"/><rect x="3" y="4" width="8" height="9" fill="#fff"/><path d="M3.5 6h5M3.5 8.5h4" stroke="#d07050"/><circle cx="12.5" cy="12" r="4.6" fill="#222" stroke="#fff" stroke-width="1.6"/><circle cx="12.5" cy="12" r="5.6" fill="none" stroke="#777" stroke-width="0.8"/></svg>
<div class="a" style="left:252px;top:43px;width:1px;height:18px;background:#c4c4c4;box-shadow:1px 0 0 #fff"></div>
<svg class="a" style="left:263.5px;top:44px" width="14" height="17" viewBox="0 0 14 17"><path d="M4.5 0.8H9.5V9.5H13L7 16.2L1 9.5H4.5z" fill="#4cb4f0" stroke="#000" stroke-width="1.2" stroke-linejoin="round"/></svg>
<svg class="a" style="left:286.5px;top:45.5px" width="15" height="15" viewBox="0 0 15 15"><circle cx="7.5" cy="7.2" r="6.8" fill="#e4a4a4" stroke="#d89898" stroke-width="0.6"/><path d="M4.5 10L10.5 4.5" stroke="#fff" stroke-width="2.2"/><circle cx="7.5" cy="7.2" r="3.8" fill="none" stroke="#fff" stroke-width="0.9" opacity="0.6"/></svg>
<svg class="a" style="left:311.5px;top:45px" width="12" height="15" viewBox="0 0 12 15"><text x="6" y="13.2" text-anchor="middle" font-family="Liberation Serif" font-weight="bold" font-size="15.5" fill="#48b8f0" stroke="#000" stroke-width="2.6" paint-order="stroke" stroke-linejoin="round">I</text></svg>
<svg class="a" style="left:333.5px;top:45px" width="15" height="15" viewBox="0 0 15 15"><text x="7.5" y="13.2" text-anchor="middle" font-family="Liberation Serif" font-weight="bold" font-size="15.5" fill="#48b8f0" stroke="#000" stroke-width="2.6" paint-order="stroke" stroke-linejoin="round">D</text></svg>
<svg class="a" style="left:357px;top:45px" width="15" height="15" viewBox="0 0 15 15"><text x="7.5" y="13.2" text-anchor="middle" font-family="Liberation Serif" font-weight="bold" font-size="15.5" fill="#48b8f0" stroke="#000" stroke-width="2.6" paint-order="stroke" stroke-linejoin="round">U</text></svg>
<svg class="a" style="left:381.5px;top:45px" width="12" height="15" viewBox="0 0 12 15"><text x="6" y="13.2" text-anchor="middle" font-family="Liberation Sans" font-weight="bold" font-size="15.5" fill="#48b8f0" stroke="#000" stroke-width="2.6" paint-order="stroke" stroke-linejoin="round">L</text></svg>
<svg class="a" style="left:405.5px;top:45px" width="12" height="15" viewBox="0 0 12 15"><text x="6" y="13.2" text-anchor="middle" font-family="Liberation Sans" font-weight="bold" font-size="15.5" fill="#48b8f0" stroke="#000" stroke-width="2.6" paint-order="stroke" stroke-linejoin="round">F</text></svg>
<svg class="a" style="left:428.5px;top:45px" width="14" height="15" viewBox="0 0 14 15"><text x="7" y="13.2" text-anchor="middle" font-family="Liberation Sans" font-weight="bold" font-size="15.5" fill="#48b8f0" stroke="#000" stroke-width="2.6" paint-order="stroke" stroke-linejoin="round">V</text></svg>
<svg class="a" style="left:452.5px;top:45px" width="14" height="15" viewBox="0 0 14 15"><text x="7" y="13.2" text-anchor="middle" font-family="Liberation Sans" font-weight="bold" font-size="15.5" fill="#48b8f0" stroke="#000" stroke-width="2.6" paint-order="stroke" stroke-linejoin="round">B</text></svg>
<svg class="a" style="left:472.5px;top:49.8px" width="7" height="4" viewBox="0 0 7 4"><path d="M0 0H7L3.5 4z" fill="#000"/></svg>
<div class="a" style="left:490.5px;top:43px;width:1px;height:18px;background:#c4c4c4;box-shadow:1px 0 0 #fff"></div>
<svg class="a" style="left:500.5px;top:44px" width="18" height="17" viewBox="0 0 18 17"><path d="M7 4h6l3.5 3.5V16H7z" fill="#a8a8a8" stroke="#8c8c8c" stroke-width="0.8"/><path d="M1 11.5L5.5 7.5V9.8H11V13.2H5.5V15.5z" fill="#9a9a9a" stroke="#808080" stroke-width="0.8"/><path d="M1.5 3.5l2 2 3.5-4" fill="none" stroke="#8c8c8c" stroke-width="1.6"/></svg>
<svg class="a" style="left:524px;top:44px" width="18" height="17" viewBox="0 0 18 17"><path d="M7 4h6l3.5 3.5V16H7z" fill="#a8a8a8" stroke="#8c8c8c" stroke-width="0.8"/><path d="M12 11.5L7.5 7.5V9.8H1V13.2H7.5V15.5z" fill="#9a9a9a" stroke="#808080" stroke-width="0.8"/><path d="M1.5 3.5l2 2 3.5-4" fill="none" stroke="#8c8c8c" stroke-width="1.6"/></svg>
<div class="a" style="left:550px;top:43px;width:1px;height:18px;background:#c4c4c4;box-shadow:1px 0 0 #fff"></div>
<svg class="a" style="left:559.5px;top:47px" width="18" height="13" viewBox="0 0 18 13"><path d="M5 5.5C10.5 4 15.5 6 15 11.5" fill="none" stroke="#9a9a9a" stroke-width="3.6"/><path d="M0.8 5.5L6.5 1V10z" fill="#9a9a9a"/></svg>
<svg class="a" style="left:584px;top:50.8px" width="5.5" height="3.2" viewBox="0 0 5.5 3.2"><path d="M0 0H5.5L2.75 3.2z" fill="#8c8c8c"/></svg>
<svg class="a" style="left:597.5px;top:47px" width="18" height="13" viewBox="0 0 18 13"><path d="M13 5.5C7.5 4 2.5 6 3 11.5" fill="none" stroke="#9a9a9a" stroke-width="3.6"/><path d="M17.2 5.5L11.5 1V10z" fill="#9a9a9a"/></svg>
<svg class="a" style="left:621.5px;top:50.8px" width="5.5" height="3.2" viewBox="0 0 5.5 3.2"><path d="M0 0H5.5L2.75 3.2z" fill="#8c8c8c"/></svg>
<div class="a" style="left:638.2px;top:43px;width:1px;height:18px;background:#c4c4c4;box-shadow:1px 0 0 #fff"></div>
<svg class="a" style="left:649px;top:44.5px" width="16" height="16" viewBox="0 0 16 16"><defs><radialGradient id="gl" cx="0.35" cy="0.3" r="0.75"><stop offset="0" stop-color="#a8d8ff"/><stop offset="0.5" stop-color="#2a70d0"/><stop offset="1" stop-color="#10307a"/></radialGradient></defs><circle cx="8" cy="8" r="7.5" fill="url(#gl)"/><path d="M9.5 1.5L5.5 8.5H8.5L6.5 14.5L11 6.5H8z" fill="#f8c820" stroke="#d09010" stroke-width="0.4"/></svg>
<svg class="a" style="left:672.5px;top:45.5px" width="17" height="15" viewBox="0 0 17 15"><path d="M1.5 8.5L6 13.5L15.5 1.8" fill="none" stroke="#9010f0" stroke-width="3.2" stroke-linecap="round" stroke-linejoin="round"/></svg>
<svg class="a" style="left:696.5px;top:44px" width="16" height="17" viewBox="0 0 16 17"><path d="M1 1h11.5l2.5 2.5V16H1z" fill="#fff" stroke="#000" stroke-width="1.5"/><path d="M12 1.2v2.5h2.8" fill="none" stroke="#333" stroke-width="0.8"/><rect x="3.3" y="3.2" width="1.8" height="4.6" fill="#000"/><ellipse cx="8.3" cy="5.5" rx="2" ry="2.3" fill="none" stroke="#000" stroke-width="1.6"/><ellipse cx="4.3" cy="11.3" rx="1.9" ry="2.3" fill="none" stroke="#000" stroke-width="1.6"/><rect x="8.5" y="9" width="1.8" height="4.6" fill="#000"/></svg>
<svg class="a" style="left:719.5px;top:45px" width="16" height="16" viewBox="0 0 16 16"><path d="M2 6.5L5.5 3L8.5 5.5L12.5 2L14.5 3.5V13.5L13.5 14.5H3.5L2.5 13L5.5 10.5z" fill="#fff" stroke="#1a6a30" stroke-width="1.1" stroke-linejoin="round"/><path d="M5 7L7.5 5L10 7.5L13 5V13H5.5L7.8 10.5z" fill="#28b828"/></svg>
<svg class="a" style="left:743.5px;top:47px" width="14" height="12" viewBox="0 0 14 12"><rect x="0.5" y="0.5" width="13" height="11" fill="#e8e8e8" stroke="#555" stroke-width="0.8"/><rect x="3" y="2" width="9" height="2.5" fill="#2a4a90"/><rect x="3" y="5.5" width="9" height="2.5" fill="#8aa0c8"/><rect x="3" y="9" width="9" height="1.5" fill="#b0d0b0"/><path d="M1.5 1v10" stroke="#777" stroke-dasharray="1 1"/></svg>
<svg class="a" style="left:765.5px;top:44px" width="18" height="15" viewBox="0 0 18 15"><path d="M1 1.5h5.5l1.5 1.5h7v10.5H1z" fill="#c8a020" stroke="#806010" stroke-width="0.8"/><path d="M1 5h16v9H1z" fill="#e8c840" stroke="#806010" stroke-width="0.8"/><rect x="4" y="7" width="11" height="6" fill="#222"/><text x="9.5" y="12.3" text-anchor="middle" font-family="Liberation Sans" font-weight="bold" font-size="6" fill="#e8c840">DT</text></svg>
<svg class="a" style="left:790.5px;top:45px" width="16" height="16" viewBox="0 0 16 16"><path d="M10 3.3A4.3 4.6 0 1 0 10 9.7" fill="none" stroke="#4a8cf0" stroke-width="2.8"/><path d="M14.5 7.6C13.8 6.6 12.6 7.2 12.3 8.8L11.4 13.8C11.1 15 10 15.1 9.3 14.4" fill="none" stroke="#f010e0" stroke-width="2" stroke-linecap="round"/><path d="M10.5 10.5h3.6" stroke="#f010e0" stroke-width="1.3"/></svg>
<svg class="a" style="left:812.5px;top:45.5px" width="18" height="14" viewBox="0 0 18 14"><rect x="7" y="0.5" width="4" height="4" fill="#8ab8e8" stroke="#5a90c8" stroke-width="0.6"/><path d="M9 4.5V6.5M2.8 9V6.5H15.2V9M9 6.5V9" stroke="#8a8a8a" stroke-width="0.7" fill="none"/><rect x="0.8" y="9" width="4" height="4" fill="#6cc06c" stroke="#3a9a3a" stroke-width="0.6"/><rect x="7" y="9" width="4" height="4" fill="#6cc06c" stroke="#3a9a3a" stroke-width="0.6"/><rect x="13.2" y="9" width="4" height="4" fill="#6cc06c" stroke="#3a9a3a" stroke-width="0.6"/></svg>
<svg class="a" style="left:837.5px;top:45px" width="16" height="16" viewBox="0 0 16 16"><circle cx="8" cy="8" r="7.5" fill="#10a030"/><circle cx="8" cy="8" r="6.2" fill="none" stroke="#2cc04c" stroke-width="0.8"/><path d="M6 4.2V11.8L12 8z" fill="#fff"/></svg>
<svg class="a" style="left:861px;top:46px" width="16" height="14" viewBox="0 0 16 14"><rect x="0.8" y="0.8" width="14.4" height="12.4" rx="1.5" fill="#111" stroke="#000"/><rect x="2" y="2" width="12" height="8" fill="none" stroke="#20e040" stroke-width="1"/><rect x="4" y="3" width="2.5" height="6" fill="#555"/><rect x="9.5" y="3" width="2.5" height="6" fill="#555"/><path d="M2.5 11.5h11" stroke="#aaa" stroke-dasharray="1 1"/></svg>
<svg class="a" style="left:884px;top:44.5px" width="16" height="16" viewBox="0 0 16 16"><path d="M8 0.8L15.2 8L8 15.2L0.8 8z" fill="#ff8000" stroke="#2020a0" stroke-width="1.3"/></svg>
<svg class="a" style="left:908px;top:45px" width="16" height="16" viewBox="0 0 16 16"><rect x="0.8" y="0.8" width="14.4" height="14" rx="1" fill="#f4f8ff" stroke="#7aa0d8" stroke-width="1.2"/><rect x="2" y="2" width="12" height="1.5" fill="#90d890"/><path d="M2 5.5h12M2 8h12M2 10.5h12M2 13h12M5.5 4v10" stroke="#9ab8e0" stroke-width="0.8"/></svg>
<svg class="a" style="left:931.5px;top:45px" width="16" height="16" viewBox="0 0 16 16"><rect x="0.8" y="0.8" width="14.4" height="14" rx="1" fill="#f4f8ff" stroke="#7aa0d8" stroke-width="1.2"/><rect x="2" y="2" width="12" height="1.5" fill="#90d890"/><path d="M2 5.5h12M2 8h12M2 10.5h12M2 13h12M5.5 4v10" stroke="#9ab8e0" stroke-width="0.8"/><path d="M8 9.5h3.5V7.5L15.8 11L11.5 14.5V12.5H8z" fill="#40a040" stroke="#207020" stroke-width="0.6"/></svg>
<svg class="a" style="left:954px;top:44px" width="18" height="17" viewBox="0 0 18 17"><rect x="7" y="0.5" width="4.5" height="5" fill="#fff" stroke="#aaa" stroke-width="0.8"/><path d="M9.2 5.5V8M2.8 10V8H15.2V10M9.2 8V10" stroke="#666" stroke-width="0.9" fill="none"/><rect x="0.8" y="10" width="4" height="6" fill="#fff" stroke="#bbb" stroke-width="0.7"/><rect x="7.2" y="10" width="4" height="6" fill="#fff" stroke="#bbb" stroke-width="0.7"/><rect x="13.2" y="10" width="4" height="6" fill="#fff" stroke="#bbb" stroke-width="0.7"/><rect x="2" y="12" width="1.6" height="2.5" fill="#9ac0f0"/><rect x="8.4" y="12" width="1.6" height="2.5" fill="#f0a070"/><rect x="14.4" y="12" width="1.6" height="2.5" fill="#90d090"/></svg>
<div class="a" style="left:980.5px;top:43px;width:1px;height:18px;background:#c4c4c4;box-shadow:1px 0 0 #fff"></div>
<svg class="a" style="left:990.5px;top:45px" width="16" height="16" viewBox="0 0 16 16"><circle cx="6.5" cy="6.5" r="6" fill="#8c8c8c"/><path d="M5 3.5V9.5L9.5 6.5z" fill="#a8a8a8"/><path d="M10.5 6.5h4.5V13H7.5" fill="none" stroke="#a0a0a0" stroke-width="1.6"/><path d="M8.5 11L6 13.2L8.5 15" fill="#999"/></svg>
<svg class="a" style="left:154px;top:76.5px" width="17" height="17" viewBox="0 0 17 17"><rect x="0.8" y="0.8" width="14" height="14" rx="1" fill="#e8f0fc" stroke="#6a90d0" stroke-width="1.2"/><rect x="2" y="2" width="11.5" height="3" fill="#a8c4f0"/><rect x="2.5" y="7" width="3" height="6.5" fill="#3a70c8"/><circle cx="12.8" cy="12.8" r="3.8" fill="#30a030" stroke="#208020" stroke-width="0.6"/><circle cx="12.8" cy="12.8" r="1.6" fill="#80e080"/></svg>
<svg class="a" style="left:176.5px;top:75.5px" width="17" height="15" viewBox="0 0 17 15"><path d="M1 1.5h5l1.5 1.5h6v3H1z" fill="#d4b030" stroke="#8a7010" stroke-width="0.7"/><path d="M3.5 5.5h13L13.5 13.5H1z" fill="#f0d658" stroke="#8a7010" stroke-width="0.7"/><path d="M1 2v11.5" stroke="#8a7010" stroke-width="0.8"/></svg>
<svg class="a" style="left:201px;top:76.5px" width="16" height="16" viewBox="0 0 16 16"><rect x="1" y="6" width="14" height="9" fill="#fff" stroke="#777" stroke-width="1"/><path d="M1 6.5h14" stroke="#4aa0f0" stroke-width="2"/><path d="M1.5 2.5H8.5C10.5 2.5 10.5 4 10.5 5V9" fill="none" stroke="#10c010" stroke-width="2"/><path d="M7.5 7.5L10.5 10.5L13.5 7.5" fill="none" stroke="#10c010" stroke-width="1.8"/><path d="M1 1.5h6" stroke="#000" stroke-width="1"/></svg>
<div class="a" style="left:221px;top:75px;width:1px;height:18px;background:#c8c8c8;box-shadow:1px 0 0 #fff"></div>
<svg class="a" style="left:228px;top:78px" width="11.5" height="11.5" viewBox="0 0 11.5 11.5"><path d="M1.5 1.5L10 10M10 1.5L1.5 10" stroke="#000" stroke-width="2.3" stroke-linecap="square"/></svg>
<svg class="a" style="left:5px;top:283px" width="17" height="17" viewBox="0 0 17 17"><rect x="6" y="0.5" width="5" height="6" fill="#fff" stroke="#999" stroke-width="0.8"/><path d="M8.5 6.5V9M2.5 11V9H14.5V11M8.5 9V11" stroke="#666" stroke-width="0.9" fill="none"/><rect x="0.5" y="11" width="4" height="5.5" fill="#fff" stroke="#aaa" stroke-width="0.7"/><rect x="6.5" y="11" width="4" height="5.5" fill="#fff" stroke="#aaa" stroke-width="0.7"/><rect x="12.5" y="11" width="4" height="5.5" fill="#fff" stroke="#aaa" stroke-width="0.7"/><rect x="1.5" y="13" width="2" height="2.5" fill="#8ac0f0"/><rect x="7.5" y="13" width="2" height="2.5" fill="#f0a070"/><rect x="13.5" y="13" width="2" height="2.5" fill="#80d080"/></svg>
<svg class="a" style="left:152.5px;top:284px" width="17" height="17" viewBox="0 0 17 17"><rect x="0.5" y="6" width="15.5" height="10.5" fill="#a4a4a4" stroke="#949494" stroke-width="0.6"/><path d="M5 12.5L13 2.5" stroke="#8c8c8c" stroke-width="3"/><path d="M4 14l1.5-2" stroke="#777" stroke-width="1.2"/></svg>
<svg class="a" style="left:177.5px;top:284px" width="16" height="17" viewBox="0 0 16 17"><rect x="2" y="7" width="13" height="9" fill="#fff" stroke="#666" stroke-width="1"/><path d="M2 7.8h13" stroke="#6ab0f0" stroke-width="1.5"/><path d="M0.5 2.5H7.5C9.5 2.5 9.5 4 9.5 5V9" fill="none" stroke="#10d010" stroke-width="2"/><path d="M6.5 7L9.5 10.5L12.5 7" fill="none" stroke="#10d010" stroke-width="1.8"/></svg>
<svg class="a" style="left:200px;top:284px" width="18" height="17" viewBox="0 0 18 17"><rect x="5.5" y="0.8" width="7" height="4" fill="#eee" stroke="#222" stroke-width="1.4"/><rect x="0.8" y="4.5" width="16.4" height="11.5" rx="2" fill="#333" stroke="#111" stroke-width="1"/><circle cx="9" cy="10.2" r="3.8" fill="#111" stroke="#666" stroke-width="1"/><circle cx="8.2" cy="9.5" r="1" fill="#ddd"/></svg>
<div class="a" style="left:221px;top:284px;width:1px;height:18px;background:#c8c8c8;box-shadow:1px 0 0 #fff"></div>
<svg class="a" style="left:228px;top:286px" width="11.5" height="11.5" viewBox="0 0 11.5 11.5"><path d="M1.5 1.5L10 10M10 1.5L1.5 10" stroke="#000" stroke-width="2.3" stroke-linecap="square"/></svg>
<svg class="a" style="left:259.5px;top:77px" width="15" height="15" viewBox="0 0 15 15"><rect x="0.5" y="0.5" width="14" height="14" fill="#f4f4f4" stroke="#666" stroke-width="0.8"/><rect x="3" y="2.5" width="10" height="3" fill="#2a4a90"/><rect x="3" y="6.5" width="10" height="3" fill="#7090c0"/><rect x="3" y="10.5" width="10" height="2.5" fill="#a0d0a0"/><path d="M1.8 1v13" stroke="#777" stroke-dasharray="1 1"/></svg>
<svg class="a" style="left:583px;top:76px" width="17" height="17" viewBox="0 0 17 17"><path d="M1 1h6.5l2.5 2.5V11H1z" fill="#fafafa" stroke="#c8c8c8" stroke-width="0.9"/><path d="M6 5.5h6.5l3 3V16H6z" fill="#fafafa" stroke="#c0c0c0" stroke-width="0.9"/></svg>
<svg class="a" style="left:607px;top:76px" width="17" height="17" viewBox="0 0 17 17"><rect x="0.8" y="2" width="10" height="13" rx="1.5" fill="#d09038" stroke="#a06a20" stroke-width="0.9"/><rect x="3" y="0.8" width="5.5" height="3" fill="#e8c070" stroke="#a06a20" stroke-width="0.6"/><path d="M6 5.5h7l3 3V16H6z" fill="#d8e8fc" stroke="#4a80d0" stroke-width="1"/></svg>
<div class="a" style="left:633px;top:75px;width:1px;height:18px;background:#c8c8c8;box-shadow:1px 0 0 #fff"></div>
<div class="a" style="left:640px;top:73px;width:23px;height:23px;background:#e8e8e8;border-top:1.5px solid #8a8a8a;border-left:1.5px solid #8a8a8a"></div>
<svg class="a" style="left:644px;top:77px" width="16" height="15" viewBox="0 0 16 15"><path d="M1 1V11L3.8 8.5L6 13L8 12L5.8 7.5H9.5z" fill="#fff" stroke="#000" stroke-width="0.9" stroke-linejoin="round"/><rect x="7.5" y="10.5" width="7.5" height="4" fill="#f8d850" stroke="#e0b820" stroke-width="0.5"/></svg>
<div class="a" style="left:669px;top:75px;width:1px;height:18px;background:#c8c8c8;box-shadow:1px 0 0 #fff"></div>
<svg class="a" style="left:678.5px;top:76px" width="18" height="17" viewBox="0 0 18 17"><rect x="0.8" y="0.8" width="16" height="10" fill="#fff" stroke="#333" stroke-width="1.2"/><rect x="2.5" y="2.2" width="3" height="1.6" fill="#ccc"/><rect x="6.5" y="2.2" width="8.5" height="1.6" fill="#bbb"/><path d="M1 5.5h15.5M1 8.5h15.5" stroke="#333" stroke-width="0.6"/><rect x="7" y="5.8" width="5" height="2.2" fill="#f0a020"/><path d="M8.8 8V15M6.2 12.5L8.8 15.5L11.4 12.5" fill="none" stroke="#222" stroke-width="1.6"/></svg>
<svg class="a" style="left:702px;top:77px" width="17" height="15" viewBox="0 0 17 15"><rect x="0.8" y="0.5" width="5.5" height="14" fill="#e4eefc" stroke="#6a9ad8" stroke-width="1"/><rect x="10.7" y="0.5" width="5.5" height="14" fill="#e4eefc" stroke="#6a9ad8" stroke-width="1"/><path d="M1.5 2.5h4.5M11.2 2.5h4.5" stroke="#70d070" stroke-width="1.2"/><path d="M3 11.5L6.5 13.5L12.5 5" fill="none" stroke="#40b040" stroke-width="2.4"/></svg>
<div class="a" style="left:728.7px;top:75px;width:1px;height:18px;background:#c8c8c8;box-shadow:1px 0 0 #fff"></div>
<svg class="a" style="left:737.5px;top:76px" width="18" height="17" viewBox="0 0 18 17"><rect x="5.5" y="0.8" width="7" height="4" fill="#eee" stroke="#222" stroke-width="1.4"/><rect x="0.8" y="4.5" width="16.4" height="11.5" rx="2" fill="#333" stroke="#111" stroke-width="1"/><circle cx="9" cy="10.2" r="3.8" fill="#111" stroke="#666" stroke-width="1"/><circle cx="8.2" cy="9.5" r="1" fill="#ddd"/></svg>
<div class="a" style="left:764px;top:75px;width:1px;height:18px;background:#c8c8c8;box-shadow:1px 0 0 #fff"></div>
<svg class="a" style="left:773.5px;top:75.5px" width="18" height="18" viewBox="0 0 18 18"><rect x="0.8" y="0.8" width="11" height="16" fill="#fafafa" stroke="#888" stroke-width="0.8" stroke-dasharray="1.2 0.8"/><rect x="2.5" y="5" width="7" height="2" fill="#ccc"/><rect x="2.5" y="8" width="7" height="4" fill="#4a90d8"/><rect x="11.5" y="0.5" width="6" height="17" rx="1" fill="#e8a820" stroke="#c08010" stroke-width="0.8"/><path d="M14.5 2v14" stroke="#f8d070" stroke-width="1" stroke-dasharray="1 1"/></svg>
<svg class="a" style="left:796px;top:81.3px" width="7.5" height="4" viewBox="0 0 7.5 4"><path d="M0 0H7.5L3.75 4z" fill="#000"/></svg>
<div class="a" style="left:809px;top:75px;width:1px;height:18px;background:#c8c8c8;box-shadow:1px 0 0 #fff"></div>
<svg class="a" style="left:816px;top:78px" width="11.5" height="11.5" viewBox="0 0 11.5 11.5"><path d="M1.5 1.5L10 10M10 1.5L1.5 10" stroke="#000" stroke-width="2.3" stroke-linecap="square"/></svg>
<svg class="a" style="left:847px;top:76.5px" width="16" height="16" viewBox="0 0 16 16"><path d="M10 3.3A4.3 4.6 0 1 0 10 9.7" fill="none" stroke="#4a8cf0" stroke-width="2.8"/><path d="M14.5 7.6C13.8 6.6 12.6 7.2 12.3 8.8L11.4 13.8C11.1 15 10 15.1 9.3 14.4" fill="none" stroke="#f010e0" stroke-width="2" stroke-linecap="round"/><path d="M10.5 10.5h3.6" stroke="#f010e0" stroke-width="1.3"/></svg>
<svg class="a" style="left:0px;top:0px" width="18" height="14" viewBox="0 0 18 14"><path d="M7.5 1.8L10.5 1L13.5 1.5L14.8 3.5L15 8L14 11.5L12.5 12H8L8.8 9.5L9.8 7.2L7.5 7.5L5 6.8L4.8 5L6.2 3.5z" fill="#40e030" stroke="#305a10" stroke-width="0.8" stroke-linejoin="round"/><path d="M9.5 3.5L14 2" stroke="#5a4a10" stroke-width="0.8"/><circle cx="9.4" cy="3.6" r="0.6" fill="#c03030"/><path d="M5.2 7.2L7.5 7.2L5.8 9.5L4.2 9z" fill="#ff9020"/><path d="M9 7.5L8.2 10.5" stroke="#fff" stroke-width="0.7"/></svg>
<!-- /ICONS -->
</body></html>
